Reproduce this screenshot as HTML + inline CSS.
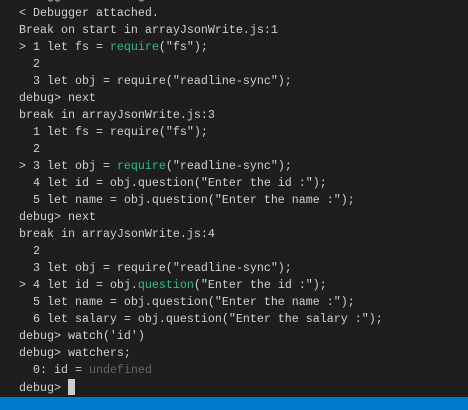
<!DOCTYPE html>
<html><head><style>
html,body{margin:0;padding:0;}
body{width:468px;height:410px;background:#1e1e1e;overflow:hidden;position:relative;}
.t{position:absolute;left:19px;top:-12px;font-family:"Liberation Mono",monospace;font-size:11.67px;line-height:17px;color:#d0d0d0;white-space:pre;}
.g{color:#2bbf80;}
.d{color:#666666;}
.cur{display:inline-block;width:7px;height:16px;background:#cccccc;vertical-align:-4px;}
.bar{position:absolute;left:0;top:397px;width:468px;height:13px;background:#007acc;}
</style></head><body>
<div class="t">Debugger listening on ws://127.0.0.1:9229/a0b1c2d3-e4f5-6789
&lt; Debugger attached.
Break on start in arrayJsonWrite.js:1
&gt; 1 let fs = <span class="g">require</span>("fs");
  2
  3 let obj = require("readline-sync");
debug&gt; next
break in arrayJsonWrite.js:3
  1 let fs = require("fs");
  2
&gt; 3 let obj = <span class="g">require</span>("readline-sync");
  4 let id = obj.question("Enter the id :");
  5 let name = obj.question("Enter the name :");
debug&gt; next
break in arrayJsonWrite.js:4
  2
  3 let obj = require("readline-sync");
&gt; 4 let id = obj.<span class="g">question</span>("Enter the id :");
  5 let name = obj.question("Enter the name :");
  6 let salary = obj.question("Enter the salary :");
debug&gt; watch('id')
debug&gt; watchers;
  0: id = <span class="d">undefined</span>
debug&gt; <span class="cur"></span></div>
<div class="bar"></div>
</body></html>
